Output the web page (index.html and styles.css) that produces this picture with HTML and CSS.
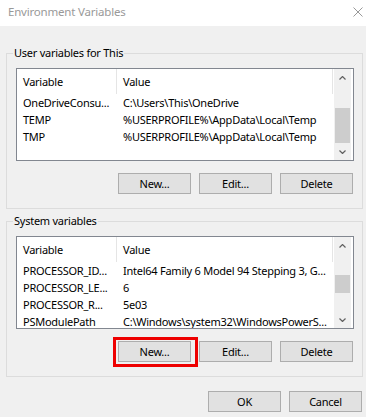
FILE: index.html
```html
<!DOCTYPE html>
<html lang="en">
<head>
    <meta charset="UTF-8">
    <title>Environment Variables</title>
    <link rel="stylesheet" href="styles.css">
</head>
<body>

<div class="titlebar">
    <span class="title">Environment Variables</span>
    <svg class="close" width="10" height="10" viewBox="0 0 10 10">
        <path d="M0.5 0.5 L9.5 9.5 M9.5 0.5 L0.5 9.5" stroke="#999" stroke-width="1" fill="none"/>
    </svg>
</div>

<div class="content">
    <fieldset class="group">
        <legend>User variables for This</legend>
        <div class="list">
            <div class="list-main">
                <div class="list-header">
                    <div class="col col-name">Variable</div>
                    <div class="col col-value">Value</div>
                </div>
                <div class="row"><div class="cell cell-name">OneDriveConsu...</div><div class="cell cell-value">C:\Users\This\OneDrive</div></div>
                <div class="row"><div class="cell cell-name">TEMP</div><div class="cell cell-value">%USERPROFILE%\AppData\Local\Temp</div></div>
                <div class="row"><div class="cell cell-name">TMP</div><div class="cell cell-value">%USERPROFILE%\AppData\Local\Temp</div></div>
            </div>
            <div class="scrollbar">
                <div class="arrow">
                    <svg width="7" height="4" viewBox="0 0 7 4"><polyline points="0.5,3.5 3.5,0.5 6.5,3.5" stroke="#606060" stroke-width="1.2" fill="none"/></svg>
                </div>
                <div class="track"><div class="thumb" style="margin-top: 22px; height: 35px"></div></div>
                <div class="arrow">
                    <svg width="7" height="4" viewBox="0 0 7 4"><polyline points="0.5,0.5 3.5,3.5 6.5,0.5" stroke="#606060" stroke-width="1.2" fill="none"/></svg>
                </div>
            </div>
        </div>
        <div class="buttons">
            <button type="button" class="button">New...</button>
            <button type="button" class="button">Edit...</button>
            <button type="button" class="button">Delete</button>
        </div>
    </fieldset>

    <fieldset class="group group-system">
        <legend>System variables</legend>
        <div class="list">
            <div class="list-main">
                <div class="list-header">
                    <div class="col col-name">Variable</div>
                    <div class="col col-value">Value</div>
                </div>
                <div class="row"><div class="cell cell-name">PROCESSOR_ID...</div><div class="cell cell-value">Intel64 Family 6 Model 94 Stepping 3, G...</div></div>
                <div class="row"><div class="cell cell-name">PROCESSOR_LE...</div><div class="cell cell-value">6</div></div>
                <div class="row"><div class="cell cell-name">PROCESSOR_R...</div><div class="cell cell-value">5e03</div></div>
                <div class="row"><div class="cell cell-name">PSModulePath</div><div class="cell cell-value">C:\Windows\system32\WindowsPowerS...</div></div>
            </div>
            <div class="scrollbar">
                <div class="arrow">
                    <svg width="7" height="4" viewBox="0 0 7 4"><polyline points="0.5,3.5 3.5,0.5 6.5,3.5" stroke="#606060" stroke-width="1.2" fill="none"/></svg>
                </div>
                <div class="track"><div class="thumb" style="margin-top: 21px; height: 18px"></div></div>
                <div class="arrow">
                    <svg width="7" height="4" viewBox="0 0 7 4"><polyline points="0.5,0.5 3.5,3.5 6.5,0.5" stroke="#606060" stroke-width="1.2" fill="none"/></svg>
                </div>
            </div>
        </div>
        <div class="buttons">
            <span class="highlight"><button type="button" class="button">New...</button></span>
            <button type="button" class="button">Edit...</button>
            <button type="button" class="button">Delete</button>
        </div>
    </fieldset>

    <div class="dialog-buttons">
        <button type="button" class="button">OK</button>
        <button type="button" class="button">Cancel</button>
    </div>
</div>

</body>
</html>
```

FILE: styles.css
```css
body {
    margin: 0;
    width: 366px;
    height: 417px;
    overflow: hidden;
    background-color: #f0f0f0;
    font-family: "Noto Sans", sans-serif;
    font-size: 11px;
    letter-spacing: -0.25px;
    color: #000;
}
.titlebar {
    height: 26px;
    background: white;
    display: flex;
    align-items: center;
    justify-content: space-between;
    padding: 0 3px 2px 8px;
    box-sizing: border-box;
}
.title {
    color: #999;
    font-size: 11.5px;
    letter-spacing: -0.2px;
    line-height: 16px;
}
.content {
    padding: 19px 3px 0 6px;
}
.group {
    margin: 0;
    min-width: 0;
    border: 1px solid #dcdcdc;
    padding: 7px 8px 14px 9px;
}
.group legend {
    padding: 0 1px;
    margin-left: -3px;
    line-height: 16px;
}
.group-system {
    margin-top: 4px;
}
.list {
    display: flex;
    height: 93px;
    box-sizing: border-box;
    border: 1px solid #828790;
    padding-right: 2px;
    background: white;
}
.list-main {
    flex: 1;
    overflow: hidden;
}
.list-header {
    display: flex;
    height: 25px;
}
.col {
    box-sizing: border-box;
    border-right: 1px solid #e5e5e5;
    padding-left: 6px;
    line-height: 25px;
}
.col-name, .cell-name {
    width: 100px;
    flex: none;
}
.col-value {
    width: 216px;
}
.row {
    display: flex;
    height: 17px;
    line-height: 17px;
    white-space: nowrap;
}
.cell {
    box-sizing: border-box;
    padding-left: 6px;
    overflow: hidden;
}
.cell-value {
    flex: 1;
}
.scrollbar {
    width: 17px;
    flex: none;
    display: flex;
    flex-direction: column;
    background: #f0f0f0;
}
.arrow {
    height: 17px;
    display: flex;
    align-items: center;
    justify-content: center;
}
.arrow svg {
    display: block;
}
.track {
    flex: 1;
}
.thumb {
    margin-left: 1px;
    margin-right: 1px;
    background: #cdcdcd;
}
.buttons, .dialog-buttons {
    display: flex;
    justify-content: flex-end;
    gap: 8px;
    padding-right: 1px;
}
.buttons {
    margin-top: 12px;
}
.dialog-buttons {
    margin-top: 14px;
}
.button {
    width: 73px;
    height: 21px;
    margin: 0;
    padding: 0;
    border: 1px solid #adadad;
    background-color: #e1e1e1;
    font: inherit;
    letter-spacing: inherit;
    color: #000;
    display: block;
}
.highlight {
    position: relative;
    display: block;
}
.highlight::after {
    content: "";
    position: absolute;
    left: -5px;
    top: -4px;
    width: 85px;
    height: 30px;
    border: 3px solid #ee0000;
    box-sizing: border-box;
}
```
